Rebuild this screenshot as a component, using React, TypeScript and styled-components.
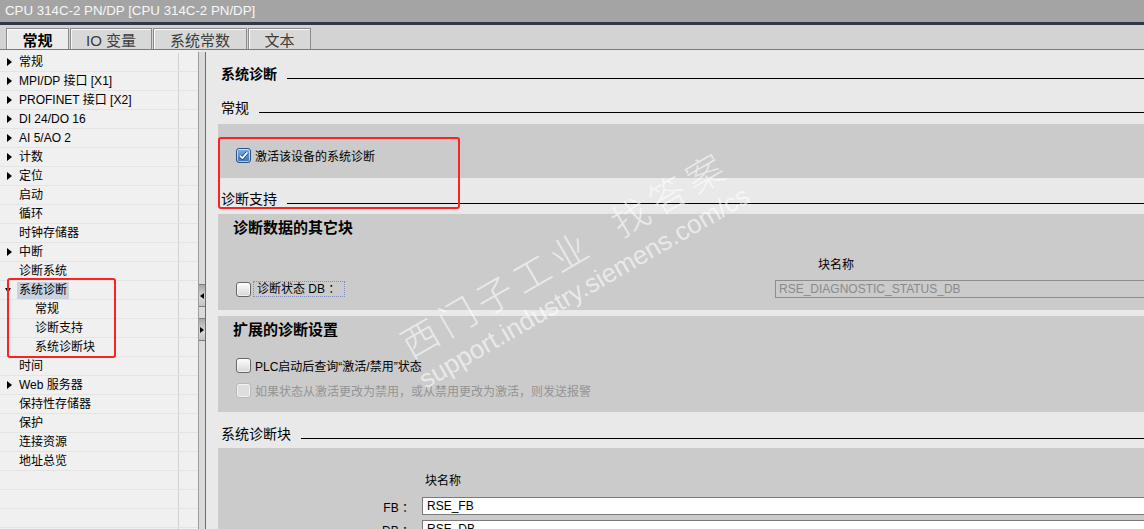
import React from 'react';
import styled, { createGlobalStyle } from 'styled-components';

const FONT = `"Liberation Sans", "Noto Sans CJK SC", sans-serif`;

const GlobalStyle = createGlobalStyle`
  html, body { margin: 0; padding: 0; }
  body { font-family: ${FONT}; overflow: hidden; background: #e9e9e9; }
  * { box-sizing: border-box; }
`;

const Window = styled.div`
  position: relative;
  width: 1144px;
  height: 529px;
  overflow: hidden;
  display: flex;
  flex-direction: column;
  background: #e9e9e9;
`;

const TitleBar = styled.div`
  flex: none;
  height: 25px;
  background: #a4a4a4;
  color: #f7f7f7;
  font-size: 13.3px;
  line-height: 22px;
  padding-left: 5px;
  border-bottom: 3px solid #2f3846;
`;

const TabBar = styled.div`
  flex: none;
  height: 25px;
  display: flex;
  align-items: flex-end;
  gap: 1px;
  padding-left: 6px;
  background: #d3d3d3;
  border-bottom: 1px solid #7a7a7a;
`;

const Tab = styled.div<{ $active?: boolean; $w: number }>`
  width: ${(p) => p.$w}px;
  height: 21px;
  display: flex;
  align-items: center;
  justify-content: center;
  border: 1px solid #8a8a8a;
  border-bottom: none;
  box-shadow: inset 1px 1px 0 #fafafa;
  background: ${(p) => (p.$active ? '#ececec' : '#d8d8d8')};
  color: ${(p) => (p.$active ? '#000' : '#3c3c3c')};
  font-size: 15px;
  font-weight: ${(p) => (p.$active ? 700 : 400)};
`;

const Body = styled.div`
  flex: 1;
  min-height: 0;
  display: flex;
`;

const Sidebar = styled.div`
  flex: none;
  width: 198px;
  background: #f0f0f0;
  padding-top: 3px;
  display: flex;
  flex-direction: column;
  overflow: hidden;
`;

const TreeRow = styled.div`
  flex: none;
  height: 19px;
  display: grid;
  grid-template-columns: 179px 1fr;
  border-bottom: 1px solid #e4e4e4;
`;

const TreeCell = styled.div<{ $level: number }>`
  display: flex;
  align-items: center;
  padding-left: ${(p) => (p.$level === 1 ? 35 : 7)}px;
  border-right: 1px solid #d2d2d2;
  font-size: 12px;
  color: #000;
  white-space: nowrap;
`;

const ArrowSlot = styled.span`
  width: 12px;
  flex: none;
  display: flex;
  align-items: center;
`;

const ArrowRight = styled.span`
  width: 0;
  height: 0;
  border-left: 5px solid #000;
  border-top: 4px solid transparent;
  border-bottom: 4px solid transparent;
`;

const ArrowDown = styled.span`
  width: 0;
  height: 0;
  margin-left: -2px;
  border-top: 5px solid #000;
  border-left: 3.5px solid transparent;
  border-right: 3.5px solid transparent;
`;

const TreeLabel = styled.span<{ $selected?: boolean }>`
  line-height: 17px;
  padding: 0 2px;
  margin-left: -2px;
  background: ${(p) => (p.$selected ? '#c9d2dd' : 'transparent')};
`;

const Splitter = styled.div`
  flex: none;
  width: 8px;
  margin-top: 2px;
  background: #dadada;
  border-left: 1px solid #9c9c9c;
  border-right: 1px solid #6c6c6c;
  display: flex;
  flex-direction: column;
  gap: 11px;
  padding-top: 232px;
`;

const SplitButton = styled.div`
  height: 23px;
  display: flex;
  align-items: center;
  justify-content: flex-end;
  padding-right: 1px;
  background: linear-gradient(#a9a9a9, #d9d9d9 60%, #c4c4c4);
  border-top: 1px solid #7d7d7d;
  border-bottom: 1px solid #7d7d7d;
`;

const TriLeft = styled.span`
  width: 0;
  height: 0;
  border-right: 4px solid #000;
  border-top: 3px solid transparent;
  border-bottom: 3px solid transparent;
`;

const TriRight = styled.span`
  width: 0;
  height: 0;
  border-left: 4px solid #000;
  border-top: 3px solid transparent;
  border-bottom: 3px solid transparent;
`;

const Content = styled.div`
  flex: 1;
  min-width: 0;
  display: flex;
  flex-direction: column;
  padding-left: 12px;
  overflow: hidden;
  background: #e9e9e9;
`;

const SectionHeader = styled.div<{ $top: number; $bold?: boolean }>`
  flex: none;
  height: 22px;
  margin-top: ${(p) => p.$top}px;
  padding-left: 3px;
  display: flex;
  align-items: center;
  gap: 10px;
  font-size: 14px;
  font-weight: ${(p) => (p.$bold ? 700 : 400)};
  color: #000;
`;

const HeaderLine = styled.div`
  flex: 1;
  height: 1px;
  margin-top: 10px;
  background: #000;
`;

const Panel = styled.div<{ $top: number; $h: number }>`
  flex: none;
  height: ${(p) => p.$h}px;
  margin-top: ${(p) => p.$top}px;
  background: #cbcbcb;
  display: flex;
  flex-direction: column;
  padding-left: 15px;
`;

const PanelTitle = styled.div`
  height: 20px;
  margin-top: 4px;
  line-height: 20px;
  font-size: 15px;
  font-weight: 700;
  color: #000;
`;

const CheckRow = styled.div<{ $top: number }>`
  height: 15px;
  margin-top: ${(p) => p.$top}px;
  margin-left: 3px;
  display: flex;
  align-items: center;
  gap: 4px;
`;

const CheckText = styled.span<{ $disabled?: boolean }>`
  font-size: 12px;
  color: ${(p) => (p.$disabled ? '#949494' : '#000')};
  white-space: nowrap;
`;

const FocusText = styled.span`
  font-size: 12px;
  color: #000;
  padding: 0 4px 0 3px;
  line-height: 14px;
  border: 1px dotted #7f8fb8;
  margin-left: -2px;
  white-space: nowrap;
`;

const CheckBox = styled.span<{ $checked?: boolean; $disabled?: boolean }>`
  flex: none;
  width: 15px;
  height: 15px;
  display: inline-flex;
  align-items: center;
  justify-content: center;
  border-radius: 3px;
  border: 1px solid
    ${(p) => (p.$checked ? '#33507a' : p.$disabled ? '#b8b8b8' : '#666')};
  background: ${(p) =>
    p.$checked
      ? 'linear-gradient(#76b2ec, #2f74c6)'
      : p.$disabled
      ? '#dedede'
      : 'linear-gradient(#fdfdfd, #d6d6d6)'};
  box-shadow: inset 0 0 0 1px rgba(255, 255, 255, 0.6);
`;

const BlockGrid = styled.div<{ $cols: string; $gap: number }>`
  display: grid;
  grid-template-columns: ${(p) => p.$cols};
  column-gap: ${(p) => p.$gap}px;
  align-items: center;
`;

const NameHead = styled.div<{ $indent: number; $top: number }>`
  grid-column: 2;
  margin-top: ${(p) => p.$top}px;
  padding-left: ${(p) => p.$indent}px;
  font-size: 12px;
  line-height: 16px;
  color: #000;
`;

const FieldLabel = styled.div<{ $top: number }>`
  grid-column: 1;
  margin-top: ${(p) => p.$top}px;
  text-align: right;
  font-size: 12px;
  color: #000;
`;

const Field = styled.input<{ $disabled?: boolean; $top: number }>`
  grid-column: 2;
  height: 18px;
  margin-top: ${(p) => p.$top}px;
  margin-right: -6px;
  padding: 0 0 0 ${(p) => (p.$disabled ? 3 : 4)}px;
  border: 1px solid ${(p) => (p.$disabled ? '#8d8d8d' : '#7a7a7a')};
  background: ${(p) => (p.$disabled ? '#cbcbcb' : '#fff')};
  color: ${(p) => (p.$disabled ? '#8a8a8a' : '#000')};
  font-family: ${FONT};
  font-size: 12px;
  outline: none;
`;

const HighlightBox = styled.div<{ $x: number; $y: number; $w: number; $h: number }>`
  position: absolute;
  left: ${(p) => p.$x}px;
  top: ${(p) => p.$y}px;
  width: ${(p) => p.$w}px;
  height: ${(p) => p.$h}px;
  border: 2px solid #fb2222;
  border-radius: 3px;
  pointer-events: none;
`;

const Watermark = styled.div`
  position: absolute;
  left: 574px;
  top: 270px;
  transform: translate(-50%, -50%) rotate(-30deg);
  color: rgba(255, 255, 255, 0.6);
  text-align: center;
  white-space: nowrap;
  pointer-events: none;
`;

const WmCn = styled.div`
  font-family: "Noto Sans CJK SC", sans-serif;
  font-weight: 300;
  font-size: 37px;
  line-height: 40px;
  letter-spacing: 6px;
`;

const WmGap = styled.span`
  display: inline-block;
  width: 28px;
`;

const WmUrl = styled.div`
  font-family: "Liberation Sans", sans-serif;
  font-size: 26px;
  line-height: 40px;
`;

type Item = { label: string; arrow?: 'right' | 'down'; level?: number; selected?: boolean };

const items: Item[] = [
  { label: '常规', arrow: 'right' },
  { label: 'MPI/DP 接口 [X1]', arrow: 'right' },
  { label: 'PROFINET 接口 [X2]', arrow: 'right' },
  { label: 'DI 24/DO 16', arrow: 'right' },
  { label: 'AI 5/AO 2', arrow: 'right' },
  { label: '计数', arrow: 'right' },
  { label: '定位', arrow: 'right' },
  { label: '启动' },
  { label: '循环' },
  { label: '时钟存储器' },
  { label: '中断', arrow: 'right' },
  { label: '诊断系统' },
  { label: '系统诊断', arrow: 'down', selected: true },
  { label: '常规', level: 1 },
  { label: '诊断支持', level: 1 },
  { label: '系统诊断块', level: 1 },
  { label: '时间' },
  { label: 'Web 服务器', arrow: 'right' },
  { label: '保持性存储器' },
  { label: '保护' },
  { label: '连接资源' },
  { label: '地址总览' },
  { label: '' },
  { label: '' },
  { label: '' },
  { label: '' },
];

const Check: React.FC<{ checked?: boolean; disabled?: boolean }> = ({ checked, disabled }) => (
  <CheckBox $checked={checked} $disabled={disabled}>
    {checked && (
      <svg width="11" height="11" viewBox="0 0 11 11">
        <path d="M1.8 5.6 L4.4 8.2 L9.4 2.4" stroke="#1d3558" strokeWidth="3.2" fill="none" strokeLinejoin="round" />
        <path d="M1.8 5.6 L4.4 8.2 L9.4 2.4" stroke="#fff" strokeWidth="1.8" fill="none" strokeLinejoin="round" />
      </svg>
    )}
  </CheckBox>
);

export default function App() {
  return (
    <Window>
      <GlobalStyle />
      <TitleBar>CPU 314C-2 PN/DP [CPU 314C-2 PN/DP]</TitleBar>
      <TabBar>
        <Tab $active $w={63}>常规</Tab>
        <Tab $w={82}>IO 变量</Tab>
        <Tab $w={94}>系统常数</Tab>
        <Tab $w={63}>文本</Tab>
      </TabBar>
      <Body>
        <Sidebar>
          {items.map((it, i) => (
            <TreeRow key={i}>
              <TreeCell $level={it.level ?? 0}>
                {(it.level ?? 0) === 0 && (
                  <ArrowSlot>
                    {it.arrow === 'right' && <ArrowRight />}
                    {it.arrow === 'down' && <ArrowDown />}
                  </ArrowSlot>
                )}
                <TreeLabel $selected={it.selected}>{it.label}</TreeLabel>
              </TreeCell>
              <div />
            </TreeRow>
          ))}
        </Sidebar>
        <Splitter>
          <SplitButton>
            <TriLeft />
          </SplitButton>
          <SplitButton>
            <TriRight />
          </SplitButton>
        </Splitter>
        <Content>
          <SectionHeader $top={12} $bold>
            系统诊断
            <HeaderLine />
          </SectionHeader>
          <SectionHeader $top={12}>
            常规
            <HeaderLine />
          </SectionHeader>
          <Panel $top={6} $h={54}>
            <CheckRow $top={24}>
              <Check checked />
              <CheckText>激活该设备的系统诊断</CheckText>
            </CheckRow>
          </Panel>
          <SectionHeader $top={9}>
            诊断支持
            <HeaderLine />
          </SectionHeader>
          <Panel $top={5} $h={96}>
            <PanelTitle>诊断数据的其它块</PanelTitle>
            <BlockGrid $cols="542px 1fr" $gap={0}>
              <NameHead $indent={43} $top={19}>块名称</NameHead>
              <CheckRow $top={7}>
                <Check />
                <FocusText>诊断状态 DB ：</FocusText>
              </CheckRow>
              <Field $disabled $top={7} readOnly value="RSE_DIAGNOSTIC_STATUS_DB" />
            </BlockGrid>
          </Panel>
          <Panel $top={6} $h={96}>
            <PanelTitle>扩展的诊断设置</PanelTitle>
            <CheckRow $top={18}>
              <Check />
              <CheckText>PLC启动后查询“激活/禁用”状态</CheckText>
            </CheckRow>
            <CheckRow $top={10}>
              <Check disabled />
              <CheckText $disabled>如果状态从激活更改为禁用，或从禁用更改为激活，则发送报警</CheckText>
            </CheckRow>
          </Panel>
          <SectionHeader $top={10}>
            系统诊断块
            <HeaderLine />
          </SectionHeader>
          <Panel $top={4} $h={120}>
            <BlockGrid $cols="181px 1fr" $gap={8}>
              <NameHead $indent={3} $top={25}>块名称</NameHead>
              <FieldLabel $top={8}>FB ：</FieldLabel>
              <Field $top={8} readOnly value="RSE_FB" />
              <FieldLabel $top={5}>DB ：</FieldLabel>
              <Field $top={5} readOnly value="RSE_DB" />
            </BlockGrid>
          </Panel>
        </Content>
      </Body>
      <HighlightBox $x={218} $y={137} $w={242} $h={72} />
      <HighlightBox $x={7} $y={278} $w={109} $h={80} />
      <Watermark>
        <WmCn>
          西门子工业<WmGap />找答案
        </WmCn>
        <WmUrl>support.industry.siemens.com/cs</WmUrl>
      </Watermark>
    </Window>
  );
}
